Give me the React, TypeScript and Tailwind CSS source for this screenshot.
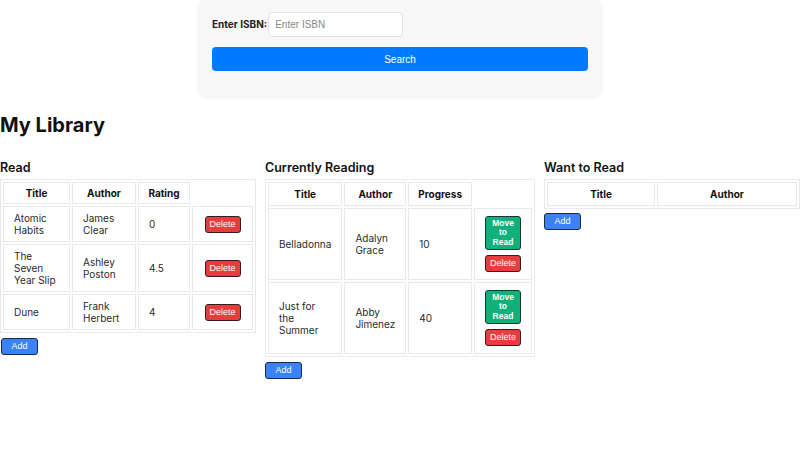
import React from "react";

const inter = { fontFamily: "Inter, 'Liberation Sans', sans-serif" };

function DelBtn() {
  return (
    <button className="w-[36px] h-[17px] bg-[#e53e3e] text-white text-[9px] leading-[15px] rounded-[3px] border border-[#3a1a1a] font-['Liberation_Sans',Arial,sans-serif]">
      Delete
    </button>
  );
}

function MoveBtn() {
  return (
    <button className="w-[36px] bg-[#10b07a] text-white text-[8.5px] leading-[9.5px] font-bold rounded-[3px] border border-[#123a2a] py-[2px] font-['Liberation_Sans',Arial,sans-serif]">
      Move
      <br />
      to
      <br />
      Read
    </button>
  );
}

function AddBtn() {
  return (
    <button className="w-[37px] h-[17px] bg-[#3b82f6] text-white text-[9px] leading-[15px] rounded-[3px] border border-[#1e2a44] font-['Liberation_Sans',Arial,sans-serif]">
      Add
    </button>
  );
}

const th = "border border-[#e6e9ee] px-[6px] text-[10px] font-bold text-center text-[#111]";
const td = "border border-[#e6e9ee] px-[10px] py-[5px] text-[10px] leading-[12px] text-[#2a2a2a] align-middle";

export default function App() {
  return (
    <div className="w-[800px] h-[450px] bg-white overflow-hidden" style={inter}>
      <div className="w-[402px] mx-auto bg-[#f8f8f8] rounded-lg shadow-[0_1px_4px_rgba(0,0,0,0.08)] pt-[12px] px-[13px] pb-[25px] font-['Liberation_Sans',Arial,sans-serif]">
        <div className="flex items-center">
          <label className="text-[10px] font-bold text-[#222] mr-[1px]" style={inter}>Enter ISBN:</label>
          <input
            placeholder="Enter ISBN"
            className="w-[135px] h-[25px] bg-white border border-[#e2e2e2] rounded-[4px] px-[6px] text-[10px] placeholder:text-[#888] outline-none"
          />
        </div>
        <button className="mt-[10px] w-full h-[24px] bg-[#007bff] text-white text-[10px] rounded-[4px]">Search</button>
      </div>

      <h1 className="mt-[17px] text-[20px] leading-[25px] font-bold text-[#111]">My Library</h1>

      <div className="flex mt-[22px] gap-[9px]">
        <div className="w-[256px]">
          <h2 className="text-[12.5px] leading-[16px] font-semibold text-[#111] mb-[3px]">Read</h2>
          <table className="w-full border border-[#e6e9ee] border-separate border-spacing-[2px]">
            <thead>
              <tr>
                <th className={th + " w-[67px] h-[22px]"}>Title</th>
                <th className={th + " w-[64px] h-[22px]"}>Author</th>
                <th className={th + " w-[52px] h-[22px]"}>Rating</th>
              </tr>
            </thead>
            <tbody>
              {[
                ["Atomic Habits", "James Clear", "0", 35],
                ["The Seven Year Slip", "Ashley Poston", "4.5", 47],
                ["Dune", "Frank Herbert", "4", 35],
              ].map(([t, a, r, h]) => (
                <tr key={t as string} style={{ height: h as number }}>
                  <td className={td}>{t}</td>
                  <td className={td}>{a}</td>
                  <td className={td}>{r}</td>
                  <td className={td + " text-center"}>
                    <DelBtn />
                  </td>
                </tr>
              ))}
            </tbody>
          </table>
          <div className="flex mt-[5px] ml-[1px]">
            <AddBtn />
          </div>
        </div>

        <div className="w-[270px]">
          <h2 className="text-[12.5px] leading-[16px] font-semibold text-[#111] mb-[3px]">Currently Reading</h2>
          <table className="w-full border border-[#e6e9ee] border-separate border-spacing-[2px]">
            <thead>
              <tr>
                <th className={th + " w-[73px] h-[24px]"}>Title</th>
                <th className={th + " w-[59px] h-[24px]"}>Author</th>
                <th className={th + " w-[65px] h-[24px]"}>Progress</th>
              </tr>
            </thead>
            <tbody>
              {[
                ["Belladonna", "Adalyn Grace", "10"],
                ["Just for the Summer", "Abby Jimenez", "40"],
              ].map(([t, a, r]) => (
                <tr key={t} className="h-[72px]">
                  <td className={td}>{t}</td>
                  <td className={td}>{a}</td>
                  <td className={td}>{r}</td>
                  <td className={td + " text-center"}>
                    <div className="flex flex-col items-center gap-[5px]">
                      <MoveBtn />
                      <DelBtn />
                    </div>
                  </td>
                </tr>
              ))}
            </tbody>
          </table>
          <div className="flex mt-[5px]">
            <AddBtn />
          </div>
        </div>

        <div className="flex-1">
          <h2 className="text-[12.5px] leading-[16px] font-semibold text-[#111] mb-[3px]">Want to Read</h2>
          <table className="w-full border border-[#e6e9ee] border-separate border-spacing-[2px]">
            <thead>
              <tr>
                <th className={th + " w-[108px] h-[24px]"}>Title</th>
                <th className={th + " h-[24px]"}>Author</th>
              </tr>
            </thead>
          </table>
          <div className="flex mt-[4px]">
            <AddBtn />
          </div>
        </div>
      </div>
    </div>
  );
}
